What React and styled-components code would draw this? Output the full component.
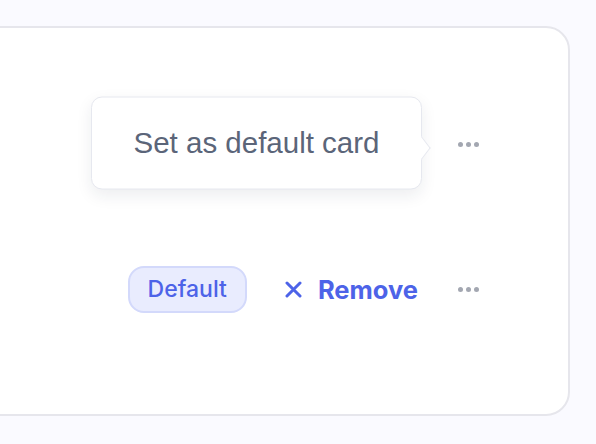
import styled, { createGlobalStyle } from 'styled-components';

const GlobalStyle = createGlobalStyle`
  html, body {
    margin: 0;
    padding: 0;
    background: #fafaff;
    font-family: Inter, "Noto Sans", sans-serif;
    overflow: hidden;
  }
`;

const Page = styled.div`
  width: 596px;
  height: 444px;
  padding-top: 26px;
  box-sizing: border-box;
`;

const Card = styled.div`
  width: 600px;
  height: 390px;
  margin-left: -30px;
  box-sizing: border-box;
  background: #ffffff;
  border: 2px solid #e6e6ec;
  border-radius: 24px;
  display: flex;
  flex-direction: column;
  padding: 90px 83px 0 0;
  gap: 93px;
`;

const Row = styled.div`
  display: flex;
  align-items: center;
  justify-content: flex-end;
  height: 52px;
`;

const MoreButton = styled.button`
  position: relative;
  width: 34px;
  height: 24px;
  border: none;
  background: none;
  padding: 0;
  display: flex;
  align-items: center;
  justify-content: center;
  gap: 3px;
  cursor: pointer;

  span {
    width: 5px;
    height: 5px;
    border-radius: 50%;
    background: #a3a7b1;
  }
`;

const Tooltip = styled.div`
  position: absolute;
  right: calc(100% + 29px);
  top: 50%;
  transform: translateY(-50%);
  width: 331px;
  height: 93px;
  box-sizing: border-box;
  background: #ffffff;
  border: 1.5px solid #e6e8ef;
  border-radius: 11px;
  box-shadow: 0 6px 16px rgba(30, 40, 70, 0.08);
  display: flex;
  align-items: center;
  justify-content: center;
  font-size: 29.5px;
  color: #5b6579;
  white-space: nowrap;
  margin-top: -1px;
  padding-bottom: 2px;

  &::after {
    content: '';
    position: absolute;
    right: -8px;
    top: 50%;
    width: 14px;
    height: 14px;
    margin-top: -3px;
    background: #ffffff;
    border-top: 1.5px solid #e6e8ef;
    border-right: 1.5px solid #e6e8ef;
    transform: rotate(45deg) skew(8deg, 8deg);
  }
`;

const Badge = styled.span`
  display: inline-flex;
  align-items: center;
  height: 47px;
  box-sizing: border-box;
  padding: 0 18px;
  border-radius: 16px;
  background: #e9ecfe;
  border: 2px solid #d3d9fb;
  color: #4d63e8;
  font-size: 23px;
  font-weight: 500;
  margin-right: 38px;
`;

const RemoveButton = styled.button`
  display: flex;
  align-items: center;
  gap: 16px;
  border: none;
  background: none;
  padding: 0;
  color: #4d63e8;
  font-family: inherit;
  font-size: 25.5px;
  font-weight: 700;
  margin-right: 33px;
  cursor: pointer;
`;

function Dots() {
  return (
    <>
      <span />
      <span />
      <span />
    </>
  );
}

export default function App() {
  return (
    <>
      <GlobalStyle />
      <Page>
        <Card>
          <Row>
            <MoreButton aria-label="More options">
              <Dots />
              <Tooltip>Set as default card</Tooltip>
            </MoreButton>
          </Row>
          <Row>
            <Badge>Default</Badge>
            <RemoveButton>
              <svg width="17" height="17" viewBox="0 0 17 17" fill="none">
                <path d="M2 2L15 15M15 2L2 15" stroke="currentColor" strokeWidth="3" strokeLinecap="round" />
              </svg>
              Remove
            </RemoveButton>
            <MoreButton aria-label="More options">
              <Dots />
            </MoreButton>
          </Row>
        </Card>
      </Page>
    </>
  );
}
